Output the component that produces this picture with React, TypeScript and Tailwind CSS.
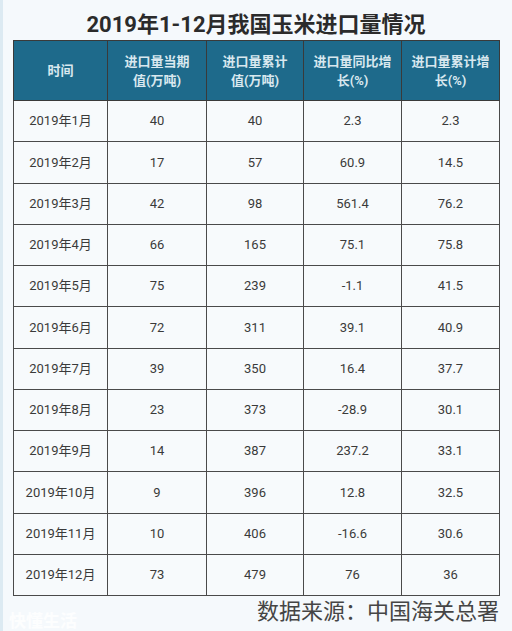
import React from "react";

const rows: [string, string, string, string, string][] = [
  ["2019年1月", "40", "40", "2.3", "2.3"],
  ["2019年2月", "17", "57", "60.9", "14.5"],
  ["2019年3月", "42", "98", "561.4", "76.2"],
  ["2019年4月", "66", "165", "75.1", "75.8"],
  ["2019年5月", "75", "239", "-1.1", "41.5"],
  ["2019年6月", "72", "311", "39.1", "40.9"],
  ["2019年7月", "39", "350", "16.4", "37.7"],
  ["2019年8月", "23", "373", "-28.9", "30.1"],
  ["2019年9月", "14", "387", "237.2", "33.1"],
  ["2019年10月", "9", "396", "12.8", "32.5"],
  ["2019年11月", "10", "406", "-16.6", "30.6"],
  ["2019年12月", "73", "479", "76", "36"],
];

const widths = ["w-[94px]", "w-[99px]", "w-[97px]", "w-[98px]", "w-[98px]"];

export default function App() {
  return (
    <div
      className="w-[512px] h-[631px] bg-[#f5f9fc] relative overflow-hidden border-l-[3px] border-[#dceaf2]"
      style={{ fontFamily: "Roboto, 'Noto Sans CJK SC', sans-serif" }}
    >
      <div className="h-[40px] flex items-end justify-center pb-[1px] pr-[3px]">
        <h1 className="text-[22px] leading-[28px] font-bold text-[#2b2b2b]">
          2019年1-12月我国玉米进口量情况
        </h1>
      </div>
      <table className="ml-[10px] border-collapse table-fixed w-[486px]">
        <thead>
          <tr className="h-[60px] bg-[#1e6a8b]">
            {["时间", "进口量当期\n值(万吨)", "进口量累计\n值(万吨)", "进口量同比增\n长(%)", "进口量累计增\n长(%)"].map((h, i) => (
              <th
                key={i}
                className={`${widths[i]} border border-[#3a3a3a] text-[13px] leading-[19px] font-bold text-[#d9e8ef] whitespace-pre-line text-center align-middle`}
              >
                {h}
              </th>
            ))}
          </tr>
        </thead>
        <tbody>
          {rows.map((r, ri) => (
            <tr key={ri} className="h-[41.25px] bg-[#f7fafc]">
              {r.map((c, ci) => (
                <td
                  key={ci}
                  className="border border-[#4a4a4a] text-[13px] text-[#3a3a3a] text-center align-middle"
                >
                  {c}
                </td>
              ))}
            </tr>
          ))}
        </tbody>
      </table>
      <div className="flex justify-between items-start pr-[13px] mt-[1px]">
        <span className="ml-[6px] mt-[12px] text-[17px] font-bold text-white/80">快懂生活</span>
        <span className="text-[22px] leading-[30px] text-[#454545]">数据来源：中国海关总署</span>
      </div>
    </div>
  );
}
